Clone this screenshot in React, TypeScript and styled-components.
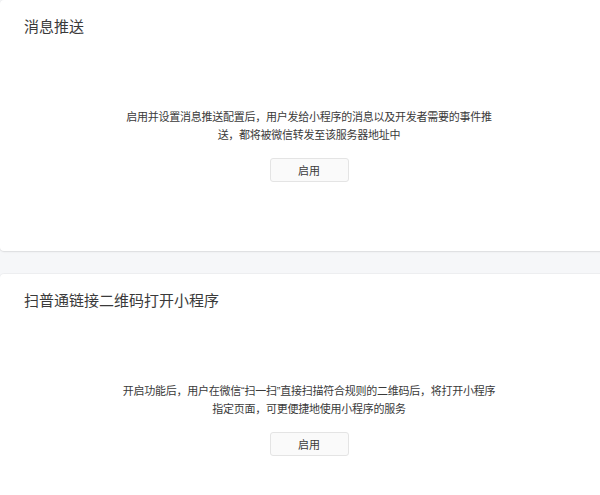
import React from "react";
import styled, { createGlobalStyle } from "styled-components";

const Global = createGlobalStyle`
  html, body {
    margin: 0;
    padding: 0;
    overflow: hidden;
    background: #f6f7f9;
  }
  body {
    font-family: "Liberation Sans", "Noto Sans CJK SC", sans-serif;
    color: #353535;
  }
`;

const Page = styled.div`
  width: 618px;
  display: flex;
  flex-direction: column;
  gap: 23px;
`;

const Card = styled.section`
  background: #fff;
  border-radius: 4px;
  box-shadow: 0 1px 2px rgba(0, 0, 0, 0.08), 0 0 0 1px rgba(0, 0, 0, 0.03);
  padding: 17px 24px 69px;
  display: flex;
  flex-direction: column;
`;

const Title = styled.h2`
  margin: 0;
  font-size: 15px;
  font-weight: 400;
  line-height: 20px;
  color: #3a3a3a;
`;

const Body = styled.div`
  margin-top: 71px;
  display: flex;
  flex-direction: column;
  align-items: center;
`;

const Desc = styled.p`
  margin: 0;
  font-size: 11px;
  line-height: 18px;
  letter-spacing: -0.25px;
  text-align: center;
  white-space: nowrap;
  color: #3a3a3a;
`;

const Button = styled.button`
  margin-top: 14px;
  width: 79px;
  height: 24px;
  border: 1px solid #e4e4e4;
  border-radius: 3px;
  background: #fafafa;
  color: #3a3a3a;
  font-family: inherit;
  font-size: 11px;
  padding: 0;
  cursor: pointer;
`;

const sections = [
  {
    title: "消息推送",
    lines: [
      "启用并设置消息推送配置后，用户发给小程序的消息以及开发者需要的事件推",
      "送，都将被微信转发至该服务器地址中",
    ],
  },
  {
    title: "扫普通链接二维码打开小程序",
    lines: [
      "开启功能后，用户在微信“扫一扫”直接扫描符合规则的二维码后，将打开小程序",
      "指定页面，可更便捷地使用小程序的服务",
    ],
  },
];

export default function App() {
  return (
    <>
      <Global />
      <Page>
        {sections.map((s) => (
          <Card key={s.title}>
            <Title>{s.title}</Title>
            <Body>
              <Desc>
                {s.lines[0]}
                <br />
                {s.lines[1]}
              </Desc>
              <Button>启用</Button>
            </Body>
          </Card>
        ))}
      </Page>
    </>
  );
}
